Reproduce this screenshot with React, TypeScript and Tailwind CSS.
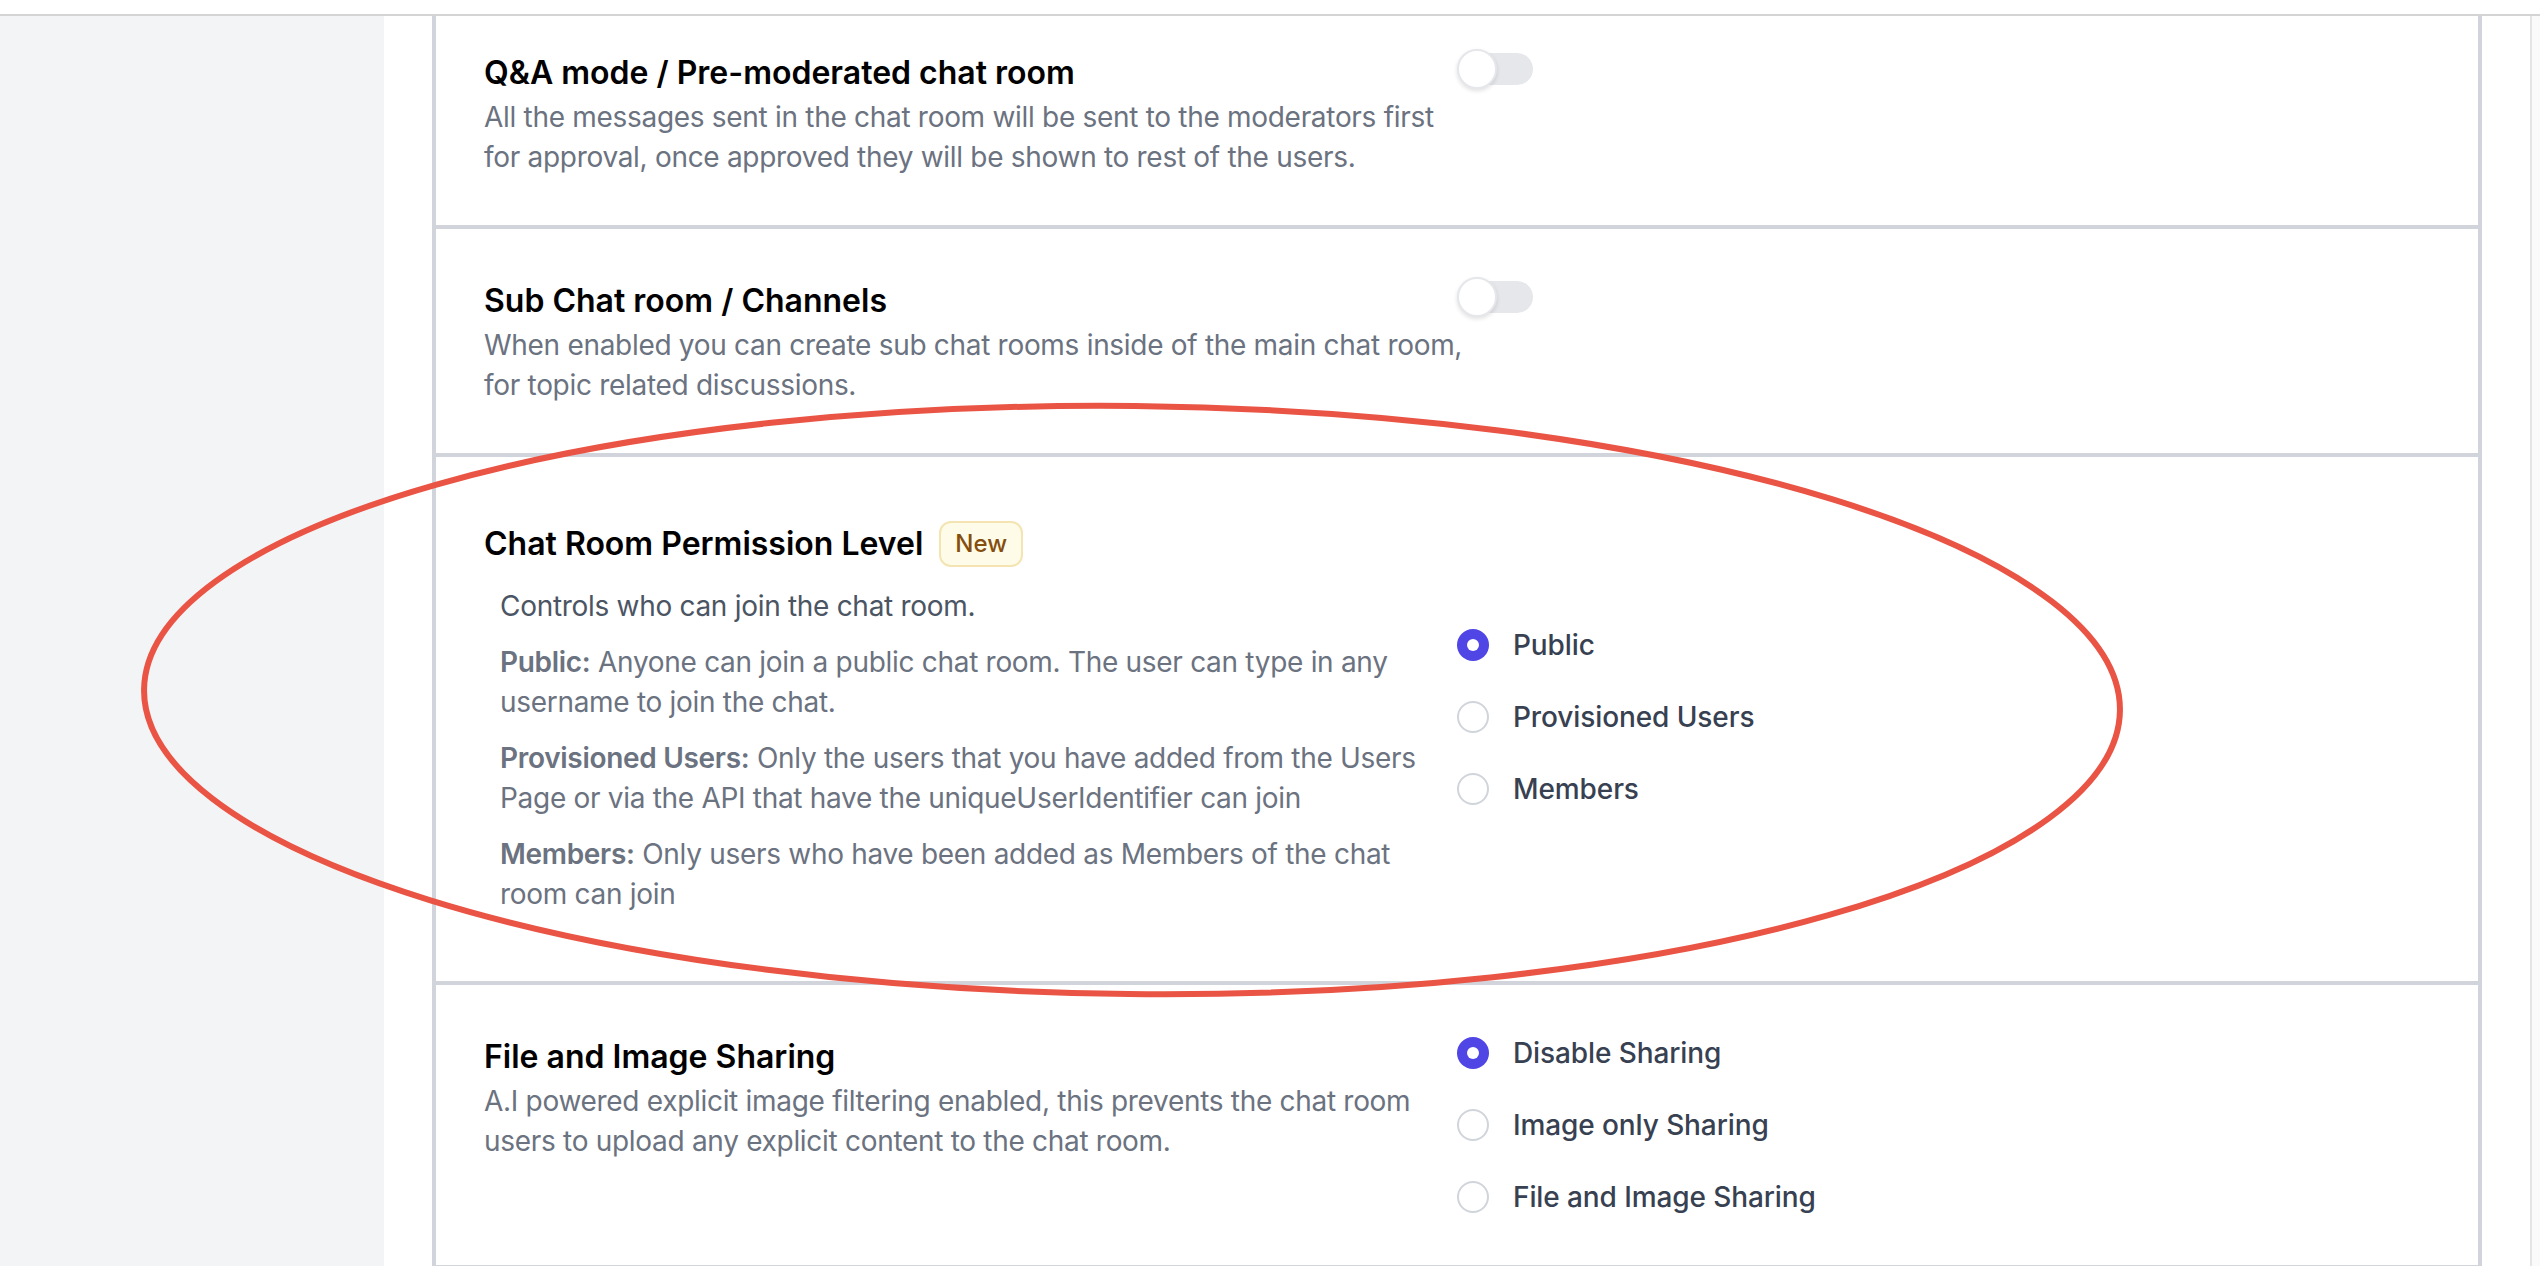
import React from "react";

const font = { fontFamily: "Inter, 'Noto Sans', sans-serif" };

function Toggle() {
  return (
    <span className="relative inline-flex h-[40px] w-[80px] flex-none items-center">
      <span className="absolute left-[4px] h-[32px] w-[72px] rounded-full bg-[#e5e7eb]" />
      <span className="absolute left-0 h-[40px] w-[40px] rounded-full border-2 border-[#e5e7eb] bg-white shadow-[0_2px_4px_rgba(0,0,0,0.12)]" />
    </span>
  );
}

function Radio({ checked, label }: { checked?: boolean; label: string }) {
  return (
    <div className="flex h-[40px] items-center">
      {checked ? (
        <span className="flex h-[32px] w-[32px] items-center justify-center rounded-full bg-[#4f46e5]">
          <span className="h-[12px] w-[12px] rounded-full bg-white" />
        </span>
      ) : (
        <span className="h-[32px] w-[32px] rounded-full border-2 border-[#d1d5db] bg-white" />
      )}
      <span className="ml-[24px] text-[28px] font-medium leading-[40px] tracking-[-0.1px] text-[#374151]">
        {label}
      </span>
    </div>
  );
}

function ToggleRow({
  title,
  desc,
  top,
}: {
  title: string;
  desc: string;
  top: string;
}) {
  return (
    <div className={`grid grid-cols-[973px_1fr] border-b-4 border-[#d1d5db] px-[48px] pb-[48px] ${top}`}>
      <div className="w-[985px]">
        <h3 className="text-[32px] font-semibold leading-[48px] text-black">{title}</h3>
        <p className="text-[28px] leading-[40px] tracking-[-0.3px] text-[#6b7280]">{desc}</p>
      </div>
      <div>
        <Toggle />
      </div>
    </div>
  );
}

export default function App() {
  return (
    <div className="relative h-[1266px] w-full overflow-hidden bg-white" style={font}>
      <div className="h-[14px]" />
      <div className="h-[2px] bg-[#d4d4d4]" />
      <div className="flex h-[1250px]">
        <aside className="w-[384px] flex-none bg-[#f3f4f6]" />
        <div className="w-[48px] flex-none" />
        <main className="w-[2050px] flex-none border-x-4 border-[#d1d5db]">
          <ToggleRow
            top="pt-[33px]"
            title="Q&A mode / Pre-moderated chat room"
            desc="All the messages sent in the chat room will be sent to the moderators first for approval, once approved they will be shown to rest of the users."
          />
          <ToggleRow
            top="pt-[48px]"
            title="Sub Chat room / Channels"
            desc="When enabled you can create sub chat rooms inside of the main chat room, for topic related discussions."
          />

          <div className="grid grid-cols-[973px_1fr] items-center border-b-4 border-[#d1d5db] px-[48px] pb-[67px] pt-[63px]">
            <div>
              <div className="flex items-center gap-[16px]">
                <h3 className="text-[32px] font-semibold leading-[48px] text-black">
                  Chat Room Permission Level
                </h3>
                <span className="inline-flex h-[46px] items-center rounded-[12px] border-2 border-[#f3e4b2] bg-[#fefce8] px-[14px] text-[24px] font-medium text-[#854d0e]">
                  New
                </span>
              </div>
              <div className="mt-[18px] px-[16px] text-[28px] leading-[40px] tracking-[-0.3px] text-[#6b7280]">
                <p className="text-[#4b5563]">Controls who can join the chat room.</p>
                <p className="mt-[16px]">
                  <span className="font-semibold">Public:</span> Anyone can join a public chat
                  room. The user can type in any username to join the chat.
                </p>
                <p className="mt-[16px]">
                  <span className="font-semibold">Provisioned Users:</span> Only the users that
                  you have added from the Users Page or via the API that have the
                  uniqueUserIdentifier can join
                </p>
                <p className="mt-[16px]">
                  <span className="font-semibold">Members:</span> Only users who have been added
                  as Members of the chat room can join
                </p>
              </div>
            </div>
            <div className="flex flex-col gap-[32px]">
              <Radio checked label="Public" />
              <Radio label="Provisioned Users" />
              <Radio label="Members" />
            </div>
          </div>

          <div className="grid grid-cols-[973px_1fr] border-b-4 border-[#d1d5db] px-[48px] pb-[48px] pt-[48px]">
            <div className="w-[985px]">
              <h3 className="text-[32px] font-semibold leading-[48px] text-black">
                File and Image Sharing
              </h3>
              <p className="text-[28px] leading-[40px] tracking-[-0.3px] text-[#6b7280]">
                A.I powered explicit image filtering enabled, this prevents the chat room users
                to upload any explicit content to the chat room.
              </p>
            </div>
            <div className="flex flex-col gap-[32px]">
              <Radio checked label="Disable Sharing" />
              <Radio label="Image only Sharing" />
              <Radio label="File and Image Sharing" />
            </div>
          </div>
        </main>
        <div className="w-[48px] flex-none" />
        <div className="w-[2px] flex-none bg-[#e5e5e5]" />
        <div className="flex-1 bg-[#fafafa]" />
      </div>

      {/* red annotation drawn over the page */}
      <svg
        className="pointer-events-none absolute left-0 top-0"
        width="2540"
        height="1266"
        viewBox="0 0 2540 1266"
      >
        <ellipse
          cx="1132"
          cy="700"
          rx="988"
          ry="294"
          fill="none"
          stroke="#ea5444"
          strokeWidth="6"
          transform="rotate(0.6 1132 700)"
        />
      </svg>
    </div>
  );
}
